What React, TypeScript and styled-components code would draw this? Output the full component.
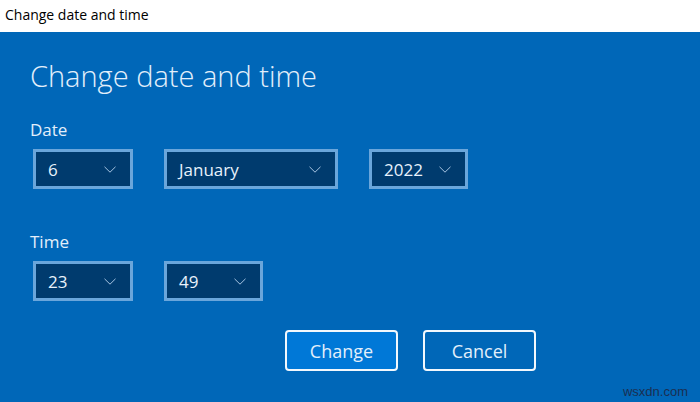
import styled, { createGlobalStyle } from 'styled-components';

const GlobalStyle = createGlobalStyle`
  html, body {
    margin: 0;
    padding: 0;
    background: #0067b8;
    font-family: "Open Sans", "Noto Sans", "Liberation Sans", sans-serif;
  }
`;

const Chevron = () => (
  <svg width="12" height="7" viewBox="0 0 12 7" fill="none">
    <path d="M0.5 0.8 L6 6.2 L11.5 0.8" stroke="#b9d4ee" strokeWidth="0.9" />
  </svg>
);

const Select = ({ value, width }: { value: string; width: number }) => (
  <SelectBox $width={width}>
    <SelectValue>{value}</SelectValue>
    <Chevron />
  </SelectBox>
);

const App = () => {
  return (
    <Window>
      <GlobalStyle />
      <TitleBar>Change date and time</TitleBar>
      <Content>
        <Heading>Change date and time</Heading>

        <Section>
          <Label>Date</Label>
          <SelectRow>
            <Select value="6" width={100} />
            <Select value="January" width={174} />
            <Select value="2022" width={99} />
          </SelectRow>
        </Section>

        <Section $top={41}>
          <Label>Time</Label>
          <SelectRow>
            <Select value="23" width={100} />
            <Select value="49" width={99} />
          </SelectRow>
        </Section>

        <ButtonRow>
          <Button $primary>Change</Button>
          <Button>Cancel</Button>
        </ButtonRow>
      </Content>
      <Watermark>wsxdn.com</Watermark>
    </Window>
  );
};

const Window = styled.div`
  position: relative;
  width: 700px;
  height: 402px;
  overflow: hidden;
  display: flex;
  flex-direction: column;
  background: #0067b8;
`;

const TitleBar = styled.div`
  height: 32px;
  flex-shrink: 0;
  background: #ffffff;
  color: #000000;
  font-size: 14px;
  line-height: 30px;
  padding-left: 5px;
`;

const Content = styled.div`
  flex: 1;
  padding: 24px 0 0 30px;
  color: #e3effb;
`;

const Heading = styled.h1`
  margin: 0;
  font-size: 29px;
  font-weight: 300;
  line-height: 40px;
  letter-spacing: 0;
`;

const Section = styled.div<{ $top?: number }>`
  margin-top: ${p => p.$top ?? 22}px;
`;

const Label = styled.div`
  font-size: 17px;
  line-height: 24px;
  margin-bottom: 7px;
`;

const SelectRow = styled.div`
  display: flex;
  gap: 31px;
  padding-left: 3px;
`;

const SelectBox = styled.div<{ $width: number }>`
  box-sizing: border-box;
  width: ${p => p.$width}px;
  height: 40px;
  border: 3px solid #6aa6db;
  background: #003b6e;
  display: flex;
  align-items: center;
  justify-content: space-between;
  padding: 0 14px 0 12px;
`;

const SelectValue = styled.span`
  font-size: 17px;
  color: #e8f2fc;
`;

const ButtonRow = styled.div`
  display: flex;
  gap: 25px;
  padding-left: 255px;
  margin-top: 29px;
`;

const Button = styled.div<{ $primary?: boolean }>`
  box-sizing: border-box;
  width: 113px;
  height: 41px;
  border: 2px solid #f2f8fd;
  border-radius: 4px;
  background: ${p => (p.$primary ? '#0078d7' : '#0067b8')};
  color: #e3effb;
  font-size: 18px;
  display: flex;
  align-items: center;
  justify-content: center;
`;

const Watermark = styled.div`
  position: absolute;
  right: 12px;
  bottom: 3px;
  font-family: "Liberation Sans", Arial, sans-serif;
  font-size: 13px;
  color: #1b2f52;
`;

export default App;
